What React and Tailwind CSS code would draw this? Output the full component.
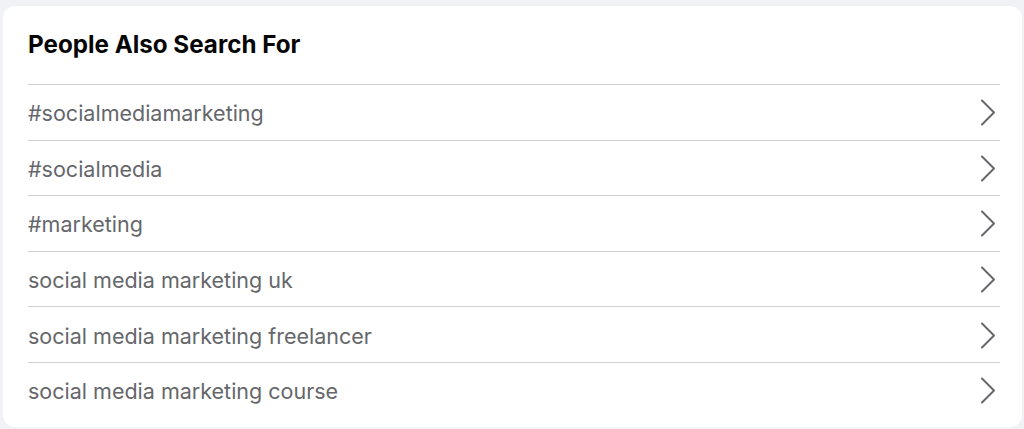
const items = [
  "#socialmediamarketing",
  "#socialmedia",
  "#marketing",
  "social media marketing uk",
  "social media marketing freelancer",
  "social media marketing course",
];

const Chevron = () => (
  <svg width="16" height="27" viewBox="0 0 16 27" fill="none">
    <path d="M2 1.5 L14 13.5 L2 25.5" stroke="#65676b" strokeWidth="2" strokeLinecap="round" strokeLinejoin="round" />
  </svg>
);

export default function App() {
  return (
    <div className="h-[429px] bg-[#f0f2f5] pl-[3px] pr-[2px] pt-[6px] pb-[2px]" style={{ fontFamily: "Inter, 'Noto Sans', sans-serif" }}>
      <div className="h-full rounded-[12px] bg-white pl-[25px] pr-[22px]">
        <div className="h-[78px] flex items-center">
          <h2 className="text-[24.2px] font-bold text-[#050505]">People Also Search For</h2>
        </div>
        {items.map((item) => (
          <div key={item} className="h-[55.6px] flex items-center justify-between border-t border-[#ced0d4]">
            <span className="text-[21.5px] text-[#65676b] pt-[2px]">{item}</span>
            <div className="mr-[4px] mt-[1px]">
              <Chevron />
            </div>
          </div>
        ))}
      </div>
    </div>
  );
}
